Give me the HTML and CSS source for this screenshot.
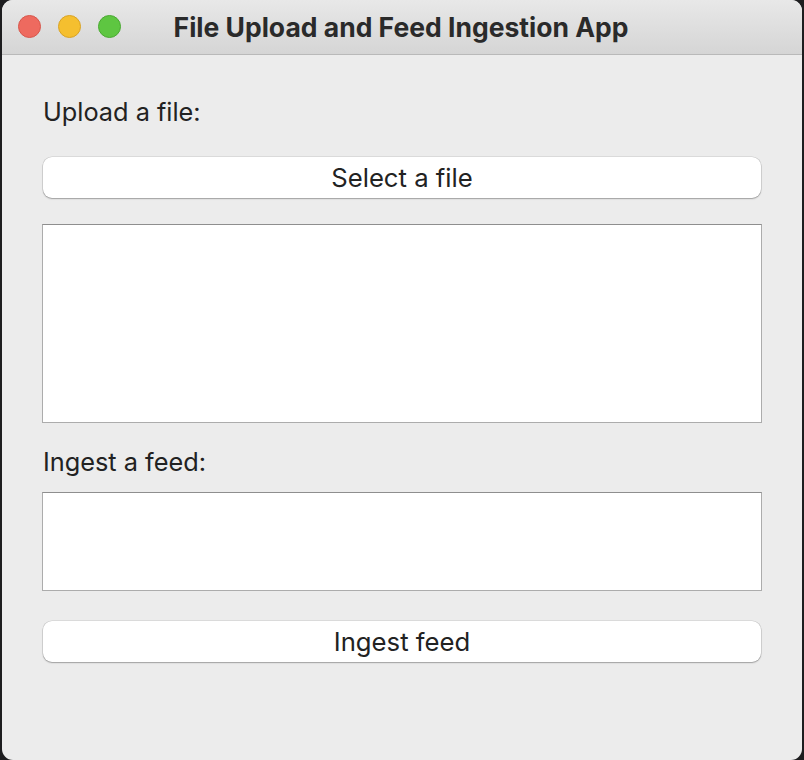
FILE: index.html
```html
<!DOCTYPE html>
<html>
<head>
<meta charset="utf-8">
<link rel="stylesheet" href="styles.css">
</head>
<body>
<div class="window">
  <div class="titlebar">
    <div class="lights">
      <span class="light red"></span>
      <span class="light yellow"></span>
      <span class="light green"></span>
    </div>
    <div class="title">File Upload and Feed Ingestion App</div>
  </div>
  <div class="content">
    <div class="label first">Upload a file:</div>
    <button class="btn btn-select">Select a file</button>
    <div class="box box-big"></div>
    <div class="label second">Ingest a feed:</div>
    <div class="box box-small"></div>
    <button class="btn btn-ingest">Ingest feed</button>
  </div>
</div>
</body>
</html>
```
FILE: styles.css
```css
html, body {
  margin: 0;
  padding: 0;
  background: #1d1d1f;
  width: 804px;
  height: 760px;
  overflow: hidden;
}
.window {
  margin-left: 2px;
  width: 800px;
  height: 760px;
  background: #ececec;
  border-radius: 11px;
  overflow: hidden;
  font-family: Inter, "Liberation Sans", sans-serif;
  color: #222;
}
.titlebar {
  position: relative;
  height: 54px;
  border-bottom: 1px solid #b9b9b9;
  background: linear-gradient(#e8e8e8, #d5d5d5);
  display: flex;
  align-items: center;
  justify-content: center;
}
.lights {
  position: absolute;
  left: 16px;
  top: 15px;
  display: flex;
  gap: 17px;
}
.light {
  width: 23px;
  height: 23px;
  border-radius: 50%;
  box-sizing: border-box;
}
.red { background: #ee6a5f; border: 1px solid #d7574c; }
.yellow { background: #f5bf2f; border: 1px solid #d9a325; }
.green { background: #5ec641; border: 1px solid #4aa932; }
.title {
  font-weight: 700;
  font-size: 26.5px;
  color: #2a2a2a;
  margin-left: -2px;
}
.content {
  padding: 0 40px;
  display: flex;
  flex-direction: column;
}
.label {
  font-size: 25.3px;
  line-height: 32px;
  height: 32px;
  padding-left: 1px;
}
.label.first { margin-top: 41px; }
.label.second { margin-top: 23px; }
.btn {
  margin: 0 1px;
  height: 41px;
  border: none;
  border-radius: 9px;
  background: #fff;
  font-family: inherit;
  font-size: 25.7px;
  color: #222;
  padding: 0;
  box-shadow: 0 0 0 0.6px rgba(0,0,0,0.14), 0 1px 1.5px rgba(0,0,0,0.28);
}
.btn-select { margin-top: 29px; }
.btn-ingest { margin-top: 30px; }
.box {
  background: #fff;
  border: 1px solid #acacac;
  border-top-color: #8e8e8e;
  box-sizing: border-box;
}
.box-big { margin-top: 26px; height: 199px; }
.box-small { margin-top: 14px; height: 99px; }
```
